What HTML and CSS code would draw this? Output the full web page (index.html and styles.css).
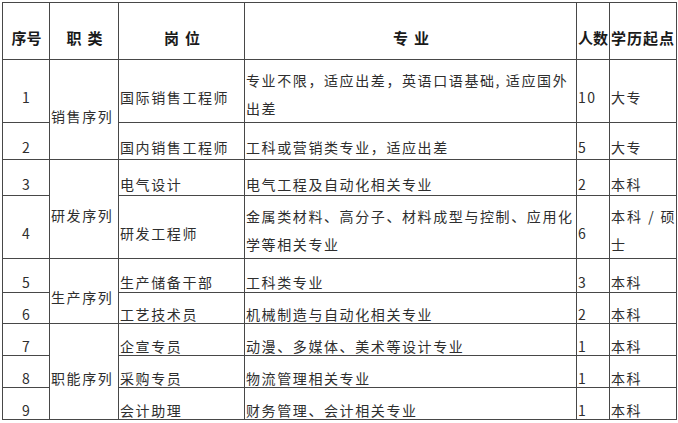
FILE: index.html
```html
<!DOCTYPE html>
<html lang="zh-CN">
<head>
<meta charset="utf-8">
<title>招聘岗位</title>
<link rel="stylesheet" href="styles.css">
</head>
<body>
<table class="jobs">
  <colgroup>
    <col class="c-no">
    <col class="c-cat">
    <col class="c-pos">
    <col class="c-major">
    <col class="c-num">
    <col class="c-edu">
  </colgroup>
  <thead>
    <tr class="h-head">
      <th class="no">序号</th>
      <th class="sp">职类</th>
      <th class="sp">岗位</th>
      <th class="sp">专业</th>
      <th class="num-h">人数</th>
      <th class="edu-h">学历起点</th>
    </tr>
  </thead>
  <tbody>
    <tr class="h-63">
      <td class="no">1</td>
      <td class="cat" rowspan="2">销售序列</td>
      <td>国际销售工程师</td>
      <td class="two">专业不限，适应出差，英语口语基础, 适应国外<br>出差</td>
      <td>10</td>
      <td>大专</td>
    </tr>
    <tr class="h-37">
      <td class="no">2</td>
      <td>国内销售工程师</td>
      <td>工科或营销类专业，适应出差</td>
      <td>5</td>
      <td>大专</td>
    </tr>
    <tr class="h-36">
      <td class="no">3</td>
      <td class="cat" rowspan="2">研发序列</td>
      <td>电气设计</td>
      <td>电气工程及自动化相关专业</td>
      <td>2</td>
      <td>本科</td>
    </tr>
    <tr class="h-63">
      <td class="no">4</td>
      <td>研发工程师</td>
      <td class="two">金属类材料、高分子、材料成型与控制、应用化学等相关专业</td>
      <td>6</td>
      <td class="two just">本科 / 硕士</td>
    </tr>
    <tr class="h-34">
      <td class="no">5</td>
      <td class="cat" rowspan="2">生产序列</td>
      <td>生产储备干部</td>
      <td>工科类专业</td>
      <td>3</td>
      <td>本科</td>
    </tr>
    <tr class="h-31">
      <td class="no">6</td>
      <td>工艺技术员</td>
      <td>机械制造与自动化相关专业</td>
      <td>2</td>
      <td>本科</td>
    </tr>
    <tr class="h-32">
      <td class="no">7</td>
      <td class="cat" rowspan="3">职能序列</td>
      <td>企宣专员</td>
      <td>动漫、多媒体、美术等设计专业</td>
      <td>1</td>
      <td>本科</td>
    </tr>
    <tr class="h-32">
      <td class="no">8</td>
      <td>采购专员</td>
      <td>物流管理相关专业</td>
      <td>1</td>
      <td>本科</td>
    </tr>
    <tr class="h-32">
      <td class="no">9</td>
      <td>会计助理</td>
      <td>财务管理、会计相关专业</td>
      <td>1</td>
      <td>本科</td>
    </tr>
  </tbody>
</table>
</body>
</html>
```

FILE: styles.css
```css
html, body {
  margin: 0;
  padding: 0;
  background: #ffffff;
}

body {
  padding: 2px 0 0 2px;
  font-family: "Noto Sans CJK SC", "Noto Sans", sans-serif;
}

.jobs {
  border-collapse: collapse;
  table-layout: fixed;
  width: 675px;
}

.c-no { width: 47px; }
.c-cat { width: 69px; }
.c-pos { width: 126px; }
.c-major { width: 332px; }
.c-num { width: 33px; }
.c-edu { width: 67px; }

.jobs th,
.jobs td {
  border: 1px solid #474747;
  padding: 12px 0 0 1px;
  vertical-align: middle;
  text-align: left;
  white-space: normal;
  overflow: visible;
}

.jobs th {
  font-size: 15px;
  font-weight: 700;
  line-height: 18px;
  color: #1a1a1a;
  text-align: center;
  padding-top: 14px;
}

.jobs th.sp {
  letter-spacing: 6px;
  text-indent: 6px;
}

.jobs th.num-h {
  padding-left: 0;
  letter-spacing: 0;
  white-space: nowrap;
}

.jobs th.edu-h {
  padding-left: 0;
  letter-spacing: 1px;
  white-space: nowrap;
}

.jobs td {
  font-size: 14px;
  line-height: 18px;
  letter-spacing: 1.6px;
  color: #2e2e2e;
}

.jobs td.no {
  text-align: center;
  letter-spacing: 0;
  padding-left: 0;
}

.jobs td.two {
  line-height: 28px;
  padding-top: 6px;
}

.jobs td.just {
  text-align: justify;
}

.h-head { height: 57px; }
.h-63 { height: 63px; }
.h-37 { height: 37px; }
.h-36 { height: 36px; }
.h-34 { height: 34px; }
.h-31 { height: 31px; }
.h-32 { height: 32px; }
```
